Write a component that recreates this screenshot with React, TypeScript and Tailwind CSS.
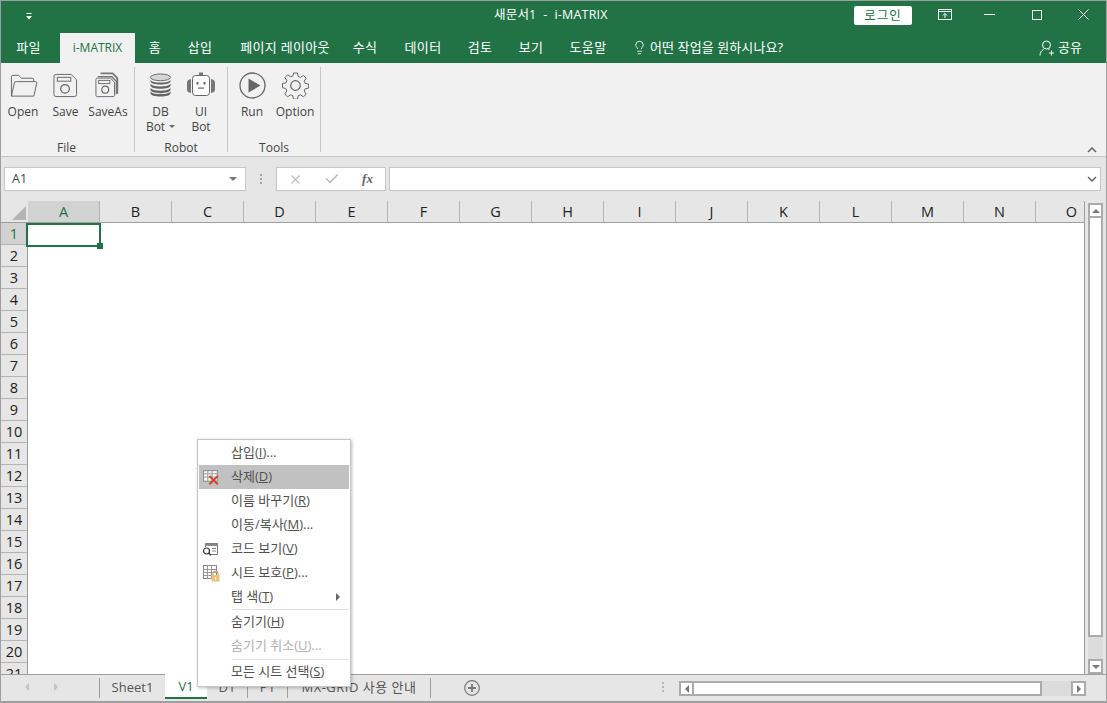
import React from "react";
import { Lightbulb, X, Check } from "lucide-react";

const FONT = "font-['Open_Sans','Noto_Sans_CJK_KR',sans-serif]";

function FolderIcon() {
  return (
    <svg width="29" height="26" viewBox="0 0 30 26" fill="none" stroke="#666" strokeWidth="1">
      <path d="M2.5 24.5V4.5q0-1.500 1.500-1.500h6l3 3h11q1.500 0 1.500 1.500v2" />
      <path d="M2.500 24.500l3-13.500q.3-1.500 2-1.500h20q1.500 0 1.200 1.500l-3 13.500z" />
    </svg>
  );
}

function SaveIcon() {
  return (
    <svg width="25" height="25" viewBox="0 0 26 26" fill="none" stroke="#666" strokeWidth="1">
      <path d="M3 1.500h16l5.500 5.500v15.500q0 2-2 2H3q-2 0-2-2v-19q0-2 2-2z" />
      <rect x="4.500" y="4.500" width="14" height="4" />
      <circle cx="12.500" cy="16.500" r="4.500" strokeWidth="1.300" />
    </svg>
  );
}

function SaveAsIcon() {
  return (
    <svg width="26" height="26" viewBox="0 0 28 28" fill="none">
      <path d="M6 1.500h13l5 5v17" stroke="#777" strokeWidth="2" />
      <path d="M3 5h15l5 5v14" stroke="#777" strokeWidth="1.500" />
      <path d="M2.500 6.500h14l4.500 4.500v14q0 1.500-1.500 1.500h-17q-1.500 0-1.500-1.500v-17q0-1.500 1.500-1.500z" fill="#f1f1f1" stroke="#666" />
      <rect x="4" y="9" width="12" height="3.500" stroke="#666" />
      <circle cx="11" cy="19" r="3.700" stroke="#666" strokeWidth="1.300" />
    </svg>
  );
}

function DbIcon() {
  return (
    <svg width="23" height="24" viewBox="0 0 24 25">
      <ellipse cx="12" cy="4.500" rx="10.500" ry="3.500" fill="#d6d6d6" stroke="#666" />
      <path d="M1.500 8.500c0 2 4.700 3.500 10.500 3.500s10.500-1.500 10.500-3.500v-1C20 9.500 16 10 12 10S4 9.500 1.500 7.500z" fill="#666" />
      <path d="M1.500 13c0 2 4.700 3.500 10.500 3.500S22.500 15 22.500 13v-1.500C20 13.500 16 14 12 14S4 13.500 1.500 11.500z" fill="#666" />
      <path d="M1.500 17.500c0 2 4.700 3.500 10.500 3.500s10.500-1.500 10.500-3.500V16c-2.500 2-6.500 2.500-10.500 2.500S4 18 1.500 16z" fill="#666" />
      <path d="M1.500 21c0 2 4.700 3.500 10.500 3.500S22.500 23 22.500 21v-1.500c-2.500 2-6.500 2.500-10.500 2.500s-8-.5-10.500-2.500z" fill="#666" />
    </svg>
  );
}

function RobotIcon() {
  return (
    <svg width="30" height="26" viewBox="0 0 30 26" fill="none">
      <rect x="13" y="0.500" width="4" height="2.500" fill="#777" />
      <rect x="6.500" y="3.500" width="17" height="20" rx="3" fill="#fff" stroke="#666" />
      <path d="M5 7v14q-4-.5-4-3.500v-7Q1 7.500 5 7zM25 7v14q4-.5 4-3.500v-7q0-3-4-3.500z" fill="#777" />
      <rect x="10.500" y="10" width="2" height="2.500" fill="#666" />
      <rect x="17.500" y="10" width="2" height="2.500" fill="#666" />
      <rect x="12" y="15.500" width="6" height="1.200" fill="#666" />
    </svg>
  );
}

function RunIcon() {
  return (
    <svg width="27" height="27" viewBox="0 0 27 27" fill="none">
      <circle cx="13.500" cy="13.500" r="12.500" stroke="#666" strokeWidth="1.300" />
      <path d="M9.500 6.500l12 7-12 7z" fill="#666" />
    </svg>
  );
}

function GearIcon() {
  return (
    <svg width="27" height="27" viewBox="0 0 27 27" fill="none" stroke="#666" strokeWidth="1">
      <path d="M11.500 1h4l.7 3.500 2.200.9 3-2 2.800 2.800-2 3 .9 2.200 3.500.7v4l-3.500.7-.9 2.200 2 3-2.800 2.800-3-2-2.200.9-.7 3.500h-4l-.7-3.500-2.200-.9-3 2-2.800-2.800 2-3-.9-2.200L.5 15.500v-4L4 10.800l.9-2.200-2-3 2.800-2.800 3 2 2.200-.9z" />
      <circle cx="13.500" cy="13.500" r="4.800" strokeWidth="1.200" />
    </svg>
  );
}

function RibbonButton({ icon, label, label2, caret, w }: { icon: React.ReactNode; label: string; label2?: string; caret?: boolean; w: string }) {
  return (
    <div className={`${w} flex flex-col items-center text-[12px] leading-[15px] text-[#444]`}>
      <div className="h-[32px] w-full flex items-center justify-center">{icon}</div>
      <div className="mt-[3px] whitespace-nowrap">{label}</div>
      {label2 && (
        <div className="whitespace-nowrap flex items-center">
          {label2}
          {caret && <span className="ml-[4px] w-0 h-0 border-x-[3px] border-x-transparent border-t-[3px] border-t-[#666]" />}
        </div>
      )}
    </div>
  );
}

function Group({ w, label, pl, labelPad, children }: { w: string; label: string; pl: string; labelPad?: string; children: React.ReactNode }) {
  return (
    <div className={`${w} mt-[4px] h-[85px] border-r border-[#c6c6c6] flex flex-col`}>
      <div className={`flex-1 flex pt-[2px] ${pl}`}>{children}</div>
      <div className={`h-[14px] leading-[20px] text-[12px] text-[#444] text-center ${labelPad ?? ""}`}>{label}</div>
    </div>
  );
}

function MenuTab({ w, children }: { w: string; children: React.ReactNode }) {
  return <div className={`${w} text-center text-[13px] tracking-[0.3px] text-white whitespace-nowrap`}>{children}</div>;
}

function DeleteIcon() {
  return (
    <svg width="19" height="17" viewBox="0 0 18 16" fill="none">
      <rect x="1.500" y="1.500" width="13" height="10" fill="#fff" stroke="#8a8a8a" />
      <path d="M1.500 4.500h13M1.500 7.500h13M5.500 1.500v10M9.500 1.500v10" stroke="#9a9a9a" />
      <path d="M7 6.500l8 8M15 6.500l-8 8" stroke="#d2492a" strokeWidth="2" />
    </svg>
  );
}

function CodeIcon() {
  return (
    <svg width="16" height="14" viewBox="0 0 16 14" fill="none">
      <path d="M3.500 5V1.500h12v11H9" stroke="#777" />
      <path d="M3.500 1.500h12V4h-12z" fill="#8a8a8a" />
      <path d="M10 6.500h4M10 9h4" stroke="#888" />
      <circle cx="4.500" cy="9" r="3" stroke="#333" strokeWidth="1.200" />
      <path d="M6.800 11.300l2 2" stroke="#333" strokeWidth="1.400" />
    </svg>
  );
}

function ProtectIcon() {
  return (
    <svg width="18" height="18" viewBox="0 0 18 18" fill="none">
      <rect x="1.500" y="1.500" width="13" height="13" fill="#fff" stroke="#8a8a8a" />
      <path d="M1.500 5.500h13M1.500 8.500h13M1.500 11.500h13M5.500 1.500v13M9.500 1.500v13" stroke="#9a9a9a" />
      <path d="M11 11V9.500a2.500 2.500 0 0 1 5 0V11" stroke="#c9a468" strokeWidth="1.200" />
      <rect x="9.500" y="11" width="8" height="6.500" fill="#efc27a" />
      <rect x="13" y="13" width="1" height="2.500" fill="#fff" />
    </svg>
  );
}

function MenuItem({ label, hot, tail, icon, active, disabled, arrow }: { label: string; hot: string; tail?: string; icon?: React.ReactNode; active?: boolean; disabled?: boolean; arrow?: boolean }) {
  return (
    <div className={`relative h-[24px] flex items-center text-[13px] whitespace-nowrap ${active ? "bg-[#c1c1c1]" : ""} ${disabled ? "text-[#b1b1b1]" : "text-[#505050]"}`}>
      <div className="w-[32px] pl-[3px] flex items-center justify-start shrink-0">{icon}</div>
      <span>
        {label}(<span className="underline">{hot}</span>){tail}
      </span>
      {arrow && <span className="absolute right-[9px] top-[8px] w-0 h-0 border-y-[4px] border-y-transparent border-l-[4px] border-l-[#666]" />}
    </div>
  );
}

function ContextMenu() {
  return (
    <div className={`absolute left-[196px] top-[438px] w-[154px] h-[248px] bg-white border border-[#c6c6c6] shadow-[1px_1px_3px_rgba(0,0,0,0.25)] px-[1px] pt-[1px] ${FONT}`}>
      <MenuItem label="삽입" hot="I" tail="..." />
      <MenuItem label="삭제" hot="D" active icon={<DeleteIcon />} />
      <MenuItem label="이름 바꾸기" hot="R" />
      <MenuItem label="이동/복사" hot="M" tail="..." />
      <MenuItem label="코드 보기" hot="V" icon={<CodeIcon />} />
      <MenuItem label="시트 보호" hot="P" tail="..." icon={<ProtectIcon />} />
      <MenuItem label="탭 색" hot="T" arrow />
      <div className="ml-[33px] h-[1px] bg-[#e1e1e1]" />
      <MenuItem label="숨기기" hot="H" />
      <MenuItem label="숨기기 취소" hot="U" tail="..." disabled />
      <div className="ml-[33px] h-[1px] bg-[#e1e1e1] mt-[1px]" />
      <MenuItem label="모든 시트 선택" hot="S" />
    </div>
  );
}

const COLS = ["A", "B", "C", "D", "E", "F", "G", "H", "I", "J", "K", "L", "M", "N", "O"];
const ROWS = Array.from({ length: 21 }, (_, i) => i + 1);

function ScrollBtn({ children, cls }: { children: React.ReactNode; cls: string }) {
  return <div className={`${cls} shrink-0 bg-white border-2 border-[#ababab] flex items-center justify-center box-border`}>{children}</div>;
}

export default function App() {
  return (
    <div className={`relative w-[1107px] h-[703px] overflow-hidden border border-[#9f9f9f] bg-[#e6e6e6] flex flex-col ${FONT}`}>
      {/* title bar */}
      <div className="h-[31px] shrink-0 bg-[#217346] relative flex items-center text-white">
        <svg className="ml-[25px] -mt-[1px]" width="6" height="7" viewBox="0 0 6 7">
          <rect x="0.500" y="0" width="5" height="1" fill="#fff" />
          <path d="M0 3h6L3 6.500z" fill="#fff" />
        </svg>
        <div className="absolute left-[493px] top-[4px] text-[12.5px] tracking-[0.2px] leading-[20px] whitespace-pre">새문서1  -  i-MATRIX</div>
        <div className="ml-[822px] w-[58px] h-[19px] mt-[-3px] bg-white rounded-[2px] text-[#217346] text-[12.5px] leading-[19px] text-center tracking-[1px]">로그인</div>
        <svg className="ml-[26px] -mt-[4px]" width="14" height="11" viewBox="0 0 14 11" fill="none" stroke="#fff">
          <rect x="0.500" y="0.500" width="13" height="10" />
          <path d="M0.500 2.500h13" />
          <path d="M7 9V4.500M5 6.500l2-2 2 2" />
        </svg>
        <svg className="ml-[32px] -mt-[4px]" width="11" height="1" viewBox="0 0 11 1">
          <rect width="11" height="1" fill="#fff" />
        </svg>
        <svg className="ml-[37px] -mt-[4px]" width="10" height="10" viewBox="0 0 10 10" fill="none" stroke="#fff">
          <rect x="0.500" y="0.500" width="9" height="9" />
        </svg>
        <svg className="ml-[36px] -mt-[4px]" width="11" height="11" viewBox="0 0 11 11" fill="none" stroke="#fff">
          <path d="M0.500 0.500l10 10M10.500 0.500l-10 10" />
        </svg>
      </div>

      {/* menu tabs */}
      <div className="h-[31px] shrink-0 bg-[#217346] flex items-center">
        <MenuTab w="w-[55px]">파일</MenuTab>
        <div className="ml-[4px] w-[75px] h-[30px] self-end bg-[#f1f1f1] text-[#217346] text-[12px] leading-[30px] text-center">i-MATRIX</div>
        <MenuTab w="w-[40px]">홈</MenuTab>
        <MenuTab w="w-[50px]">삽입</MenuTab>
        <MenuTab w="w-[120px]">페이지 레이아웃</MenuTab>
        <MenuTab w="w-[40px]">수식</MenuTab>
        <MenuTab w="w-[76px]">데이터</MenuTab>
        <MenuTab w="w-[38px]">검토</MenuTab>
        <MenuTab w="w-[64px]">보기</MenuTab>
        <MenuTab w="w-[50px]">도움말</MenuTab>
        <Lightbulb className="ml-[19px] text-white" size={15} strokeWidth={1.300} />
        <div className="ml-[3px] w-[134px] text-[13px] tracking-[0.1px] text-white whitespace-nowrap">어떤 작업을 원하시나요?</div>
        <svg className="ml-[255px]" width="16" height="16" viewBox="0 0 16 16" fill="none" stroke="#fff">
          <circle cx="7.500" cy="5" r="4" />
          <path d="M1 15.500c0-3 1.500-5 3.500-6M9.500 9.500h1" />
          <path d="M12.500 10.500v5M10 13h5" />
        </svg>
        <div className="ml-[3px] text-[13px] text-white">공유</div>
      </div>

      {/* ribbon */}
      <div className="h-[94px] shrink-0 bg-[#f1f1f1] border-b border-[#c6c6c6] flex relative">
        <Group w="w-[134px]" pl="pl-0" labelPad="pr-[2px]" label="File">
          <RibbonButton w="w-[44px]" label="Open" icon={<FolderIcon />} />
          <RibbonButton w="w-[41px]" label="Save" icon={<SaveIcon />} />
          <RibbonButton w="w-[44px]" label="SaveAs" icon={<SaveAsIcon />} />
        </Group>
        <Group w="w-[93px]" pl="pl-[6px]" label="Robot">
          <RibbonButton w="w-[39px]" label="DB" label2="Bot" caret icon={<DbIcon />} />
          <RibbonButton w="w-[42px]" label="UI" label2="Bot" icon={<RobotIcon />} />
        </Group>
        <Group w="w-[93px]" pl="pl-[4px]" label="Tools">
          <RibbonButton w="w-[40px]" label="Run" icon={<RunIcon />} />
          <RibbonButton w="w-[46px]" label="Option" icon={<GearIcon />} />
        </Group>
        <svg className="absolute right-[9px] bottom-[3px]" width="10" height="6" viewBox="0 0 10 6" fill="none" stroke="#666" strokeWidth="1.500">
          <path d="M1 5l4-4 4 4" />
        </svg>
      </div>

      {/* formula bar */}
      <div className="h-[44px] shrink-0 flex items-start pt-[10px] pl-[3px] pr-[5px]">
        <div className="w-[242px] h-[24px] bg-white border border-[#c6c6c6] flex items-center justify-between pl-[7px] pr-[8px] text-[12.5px] text-[#444]">
          A1
          <span className="w-0 h-0 border-x-[4px] border-x-transparent border-t-[4px] border-t-[#777]" />
        </div>
        <div className="w-[30px] h-[24px] flex flex-col items-center justify-center gap-[2px]">
          <span className="w-[2px] h-[2px] bg-[#a5a5a5]" />
          <span className="w-[2px] h-[2px] bg-[#a5a5a5]" />
          <span className="w-[2px] h-[2px] bg-[#a5a5a5]" />
        </div>
        <div className="w-[110px] h-[24px] bg-white border border-[#c6c6c6] flex items-center text-[#bdbdbd]">
          <div className="w-[36px] flex justify-center"><X size={15} strokeWidth={1.800} /></div>
          <div className="w-[37px] flex justify-center"><Check size={16} strokeWidth={2.500} /></div>
          <div className="w-[35px] text-center text-[#666] text-[13px] font-bold italic font-['Liberation_Serif',serif]">fx</div>
        </div>
        <div className="ml-[3px] flex-1 h-[24px] bg-white border border-[#c6c6c6] flex items-center justify-end pr-[3px]">
          <svg width="10" height="6" viewBox="0 0 10 6" fill="none" stroke="#666" strokeWidth="1.500">
            <path d="M1 1l4 4 4-4" />
          </svg>
        </div>
      </div>

      {/* sheet */}
      <div className="h-[473px] shrink-0 flex">
        <div className="w-[1084px] shrink-0 flex flex-col border-r border-[#9f9f9f]">
          <div className="h-[21px] shrink-0 flex overflow-hidden border-b border-[#9f9f9f] box-content">
            <div className="w-[27px] shrink-0 relative">
              <div className="absolute right-[2px] bottom-[2px] w-0 h-0 border-l-[14px] border-l-transparent border-b-[14px] border-b-[#b4b4b4]" />
            </div>
            {COLS.map((c) => (
              <div key={c} className={`w-[72px] shrink-0 text-center text-[14.5px] leading-[21px] border-r border-[#b4b4b4] ${c === "A" ? "bg-[#d2d2d2] text-[#217346]" : "text-[#222]"}`}>
                {c}
              </div>
            ))}
          </div>
          <div className="flex-1 relative flex overflow-hidden">
            <div className="w-[27px] shrink-0 border-r border-[#9f9f9f]">
              {ROWS.map((r) => (
                <div key={r} className={`h-[22px] text-center text-[14.5px] leading-[21px] border-b border-[#b4b4b4] ${r === 1 ? "bg-[#d2d2d2] text-[#217346]" : "text-[#222]"}`}>
                  {r}
                </div>
              ))}
            </div>
            <div className="flex-1 bg-white" />
            <div className="absolute left-[25px] top-0 w-[75px] h-[24px] border-2 border-[#217346]" />
            <div className="absolute left-[96px] top-[20px] w-[6px] h-[6px] bg-[#217346]" />
          </div>
        </div>
        <div className="flex-1 flex flex-col pl-[3px] pr-[3px] pt-[2px]">
          <ScrollBtn cls="w-[15px] h-[15px]">
            <span className="w-0 h-0 border-x-[4px] border-x-transparent border-b-[4px] border-b-[#777]" />
          </ScrollBtn>
          <div className="w-[15px] h-[419px] shrink-0 bg-white border-2 border-t-0 border-[#ababab]" />
          <div className="w-[15px] flex-1 bg-[#dbdbdb]" />
          <ScrollBtn cls="w-[15px] h-[15px]">
            <span className="w-0 h-0 border-x-[4px] border-x-transparent border-t-[4px] border-t-[#777]" />
          </ScrollBtn>
        </div>
      </div>

      {/* sheet tabs */}
      <div className="flex-1 border-t border-[#9f9f9f] border-b flex items-start text-[13px] text-[#555]">
        <div className="w-[98px] h-[24px] flex items-center shrink-0">
          <span className="ml-[24px] w-0 h-0 border-y-[4px] border-y-transparent border-r-[4px] border-r-[#c4c4c4]" />
          <span className="ml-[25px] w-0 h-0 border-y-[4px] border-y-transparent border-l-[4px] border-l-[#c4c4c4]" />
        </div>
        <div className="mt-[3px] w-[66px] h-[20px] border-l border-[#9f9f9f] shrink-0 text-center leading-[19px]">Sheet1</div>
        <div className="-mt-[1px] w-[42px] h-[25px] bg-white border-b-2 border-[#217346] text-[#217346] text-center leading-[24px] shrink-0">V1</div>
        <div className="mt-[3px] w-[41px] h-[20px] border-r border-[#9f9f9f] shrink-0 text-center leading-[19px]">D1</div>
        <div className="mt-[3px] w-[40px] h-[20px] border-r border-[#9f9f9f] shrink-0 text-center leading-[19px]">P1</div>
        <div className="mt-[3px] w-[143px] h-[20px] border-r border-[#9f9f9f] shrink-0 text-center leading-[19px] tracking-[0.5px] whitespace-nowrap">MX-GRID 사용 안내</div>
        <svg className="ml-[33px] mt-[5px] shrink-0" width="16" height="16" viewBox="0 0 16 16" fill="none" stroke="#777">
          <circle cx="8" cy="8" r="7.300" strokeWidth="1.200" />
          <path d="M8 4v8M4 8h8" strokeWidth="1.800" />
        </svg>
        <div className="ml-[182px] mt-[7px] flex flex-col gap-[2px] shrink-0">
          <span className="w-[2px] h-[2px] bg-[#b9b9b9]" />
          <span className="w-[2px] h-[2px] bg-[#b9b9b9]" />
          <span className="w-[2px] h-[2px] bg-[#b9b9b9]" />
        </div>
        <div className="ml-[15px] mt-[6px] flex shrink-0">
          <ScrollBtn cls="w-[15px] h-[15px]">
            <span className="w-0 h-0 border-y-[4px] border-y-transparent border-r-[4px] border-r-[#777]" />
          </ScrollBtn>
          <div className="w-[348px] h-[15px] bg-white border-2 border-l-0 border-[#ababab]" />
          <div className="w-[29px] h-[15px] bg-[#dbdbdb]" />
          <ScrollBtn cls="w-[15px] h-[15px]">
            <span className="w-0 h-0 border-y-[4px] border-y-transparent border-l-[4px] border-l-[#777]" />
          </ScrollBtn>
        </div>
      </div>

      <ContextMenu />
    </div>
  );
}
